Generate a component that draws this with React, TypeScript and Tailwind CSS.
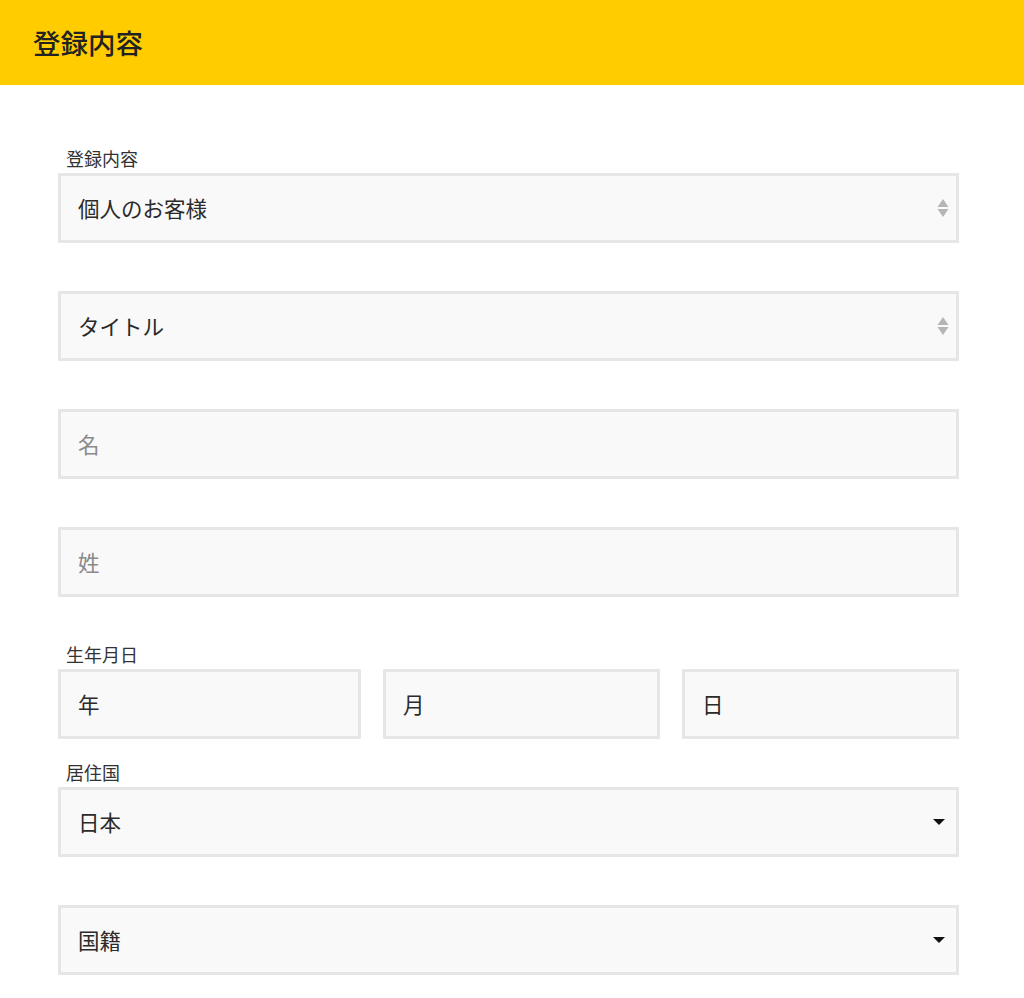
import React from "react";

const font = {
  fontFamily: '"Noto Sans CJK JP", "Noto Sans", sans-serif',
};

function UpDownArrows() {
  return (
    <svg width="12" height="22" viewBox="0 0 12 22" className="shrink-0 mr-[-4px]">
      <path d="M6 2 L11.5 10 L0.5 10 Z" fill="#b5b5b5" />
      <path d="M0.5 12 L11.5 12 L6 20 Z" fill="#b5b5b5" />
    </svg>
  );
}

function Caret() {
  return (
    <svg width="12" height="8" viewBox="0 0 12 8" className="shrink-0">
      <path d="M0 1 L12 1 L6 7 Z" fill="#111" />
    </svg>
  );
}

function Box({
  text,
  placeholder,
  icon,
  className = "",
}: {
  text: string;
  placeholder?: boolean;
  icon?: "updown" | "caret";
  className?: string;
}) {
  return (
    <div
      className={`h-[70px] border-[3px] border-[#e6e6e6] bg-[#f9f9f9] flex items-center pl-[17px] pr-[11px] ${className}`}
    >
      <span
        className={`flex-1 text-[21.5px] leading-none ${
          placeholder ? "text-[#8a8a8a]" : "text-[#2b2b2b]"
        }`}
      >
        {text}
      </span>
      {icon === "updown" && <UpDownArrows />}
      {icon === "caret" && <Caret />}
    </div>
  );
}

function Label({ children }: { children: React.ReactNode }) {
  return (
    <div className="h-6 mb-[3px] pl-[8px] text-[18px] leading-6 text-[#333]">
      {children}
    </div>
  );
}

export default function App() {
  return (
    <div className="min-h-[998px] bg-white" style={font}>
      <header className="h-[85px] bg-[#ffcc00] flex items-center pl-[33px]">
        <h1 className="text-[27.5px] font-medium text-[#222] leading-none">
          登録内容
        </h1>
      </header>

      <main className="ml-[58px] w-[901px] pt-[61px]">
        <Label>登録内容</Label>
        <Box text="個人のお客様" icon="updown" />

        <Box text="タイトル" icon="updown" className="mt-[48px]" />

        <Box text="名" placeholder className="mt-[48px]" />

        <Box text="姓" placeholder className="mt-[48px]" />

        <div className="mt-[45px]">
          <Label>生年月日</Label>
          <div className="flex gap-[22px]">
            <Box text="年" className="w-[303px]" />
            <Box text="月" className="w-[277px]" />
            <Box text="日" className="w-[277px]" />
          </div>
        </div>

        <div className="mt-[21px]">
          <Label>居住国</Label>
          <Box text="日本" icon="caret" />
        </div>

        <Box text="国籍" icon="caret" className="mt-[48px]" />
      </main>
    </div>
  );
}
